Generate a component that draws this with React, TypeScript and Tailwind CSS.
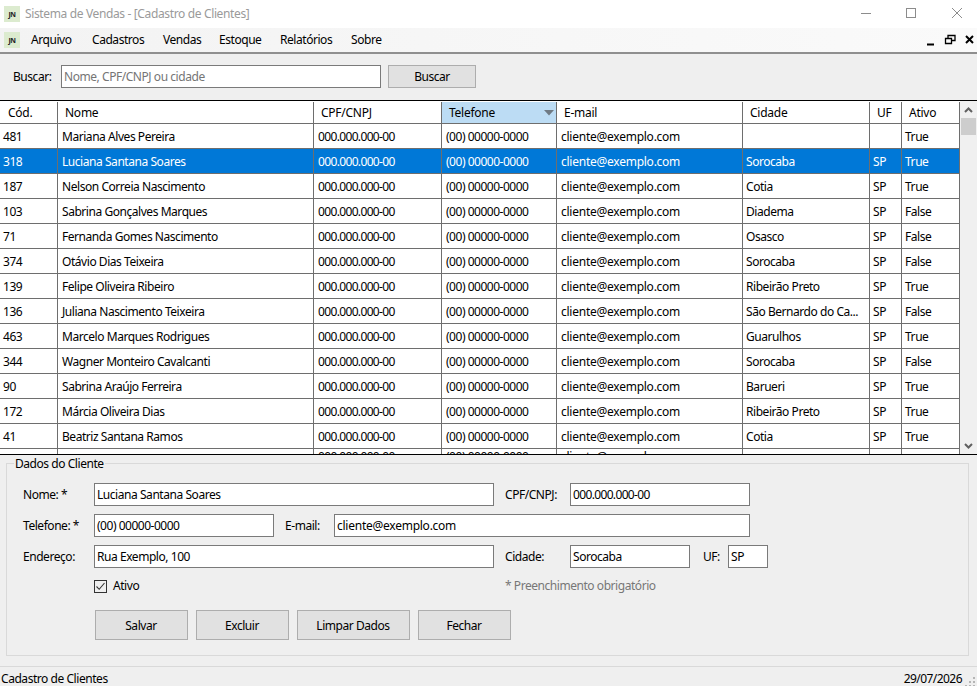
import React from "react";

// Column template shared by the header and the rows
const gridCols = "grid grid-cols-[58px_256px_128px_115px_186px_127px_32px_58px]";

type Cliente = {
  id: string;
  nome: string;
  cidade: string;
  uf: string;
  ativo: string;
};

const clientes: Cliente[] = [
  { id: "481", nome: "Mariana Alves Pereira", cidade: "", uf: "", ativo: "True" },
  { id: "318", nome: "Luciana Santana Soares", cidade: "Sorocaba", uf: "SP", ativo: "True" },
  { id: "187", nome: "Nelson Correia Nascimento", cidade: "Cotia", uf: "SP", ativo: "True" },
  { id: "103", nome: "Sabrina Gonçalves Marques", cidade: "Diadema", uf: "SP", ativo: "False" },
  { id: "71", nome: "Fernanda Gomes Nascimento", cidade: "Osasco", uf: "SP", ativo: "False" },
  { id: "374", nome: "Otávio Dias Teixeira", cidade: "Sorocaba", uf: "SP", ativo: "False" },
  { id: "139", nome: "Felipe Oliveira Ribeiro", cidade: "Ribeirão Preto", uf: "SP", ativo: "True" },
  { id: "136", nome: "Juliana Nascimento Teixeira", cidade: "São Bernardo do Ca...", uf: "SP", ativo: "False" },
  { id: "463", nome: "Marcelo Marques Rodrigues", cidade: "Guarulhos", uf: "SP", ativo: "True" },
  { id: "344", nome: "Wagner Monteiro Cavalcanti", cidade: "Sorocaba", uf: "SP", ativo: "False" },
  { id: "90", nome: "Sabrina Araújo Ferreira", cidade: "Barueri", uf: "SP", ativo: "True" },
  { id: "172", nome: "Márcia Oliveira Dias", cidade: "Ribeirão Preto", uf: "SP", ativo: "True" },
  { id: "41", nome: "Beatriz Santana Ramos", cidade: "Cotia", uf: "SP", ativo: "True" },
];

const menus = [
  { label: "Arquivo", className: "w-[61px]" },
  { label: "Cadastros", className: "w-[71px]" },
  { label: "Vendas", className: "w-[56px]" },
  { label: "Estoque", className: "w-[61px]" },
  { label: "Relatórios", className: "w-[71px]" },
  { label: "Sobre", className: "w-[50px]" },
];

const JnLogo = () => (
  <div className="w-[16px] h-[16px] bg-[#dcebcf] flex items-center justify-center text-[7px] font-bold leading-none text-[#222] tracking-[-0.5px]">
    JN
  </div>
);

const HeaderCell = ({ label, className = "" }: { label: string; className?: string }) => (
  <div className={`h-full border-r border-b border-[#6e6e6e] flex items-center truncate tracking-[-0.25px] ${className}`}>{label}</div>
);

const Cell = ({ children, className = "" }: { children?: React.ReactNode; className?: string }) => (
  <div className={`h-full border-r border-b border-[#6e6e6e] flex items-center pt-[2px] overflow-hidden whitespace-nowrap ${className}`}>
    {children}
  </div>
);

const Field = ({ value, className = "" }: { value: string; className?: string }) => (
  <input
    readOnly
    value={value}
    className={`h-[23px] shrink-0 bg-white border border-[#7a7a7a] px-[2px] outline-none text-black ${className}`}
  />
);

const ActionButton = ({ label, className = "" }: { label: string; className?: string }) => (
  <button className={`h-[30px] pt-[1px] pr-[1px] bg-[#e1e1e1] border border-[#adadad] text-black ${className}`}>{label}</button>
);

export default function App() {
  return (
    <div className="w-[977px] h-[686px] overflow-hidden bg-[#efefef] text-[12px] leading-[16px] text-black font-['Noto_Sans',sans-serif] tracking-[-0.45px]">
      {/* Title bar */}
      <div className="h-[28px] bg-white flex items-center">
        <div className="ml-[4px]">
          <JnLogo />
        </div>
        <span className="ml-[5px] text-[#9a9a9a] tracking-[-0.36px]">Sistema de Vendas - [Cadastro de Clientes]</span>
        <svg width="102" height="12" viewBox="0 0 102 12" className="ml-auto mr-[14px] mb-[3px]" fill="none" stroke="#8c8c8c" strokeWidth="1">
          <path d="M0 6.5H10" />
          <rect x="45.5" y="1.5" width="9" height="9" />
          <path d="M91 1L101 11M101 1L91 11" />
        </svg>
      </div>

      {/* Menu bar */}
      <div className="h-[24px] bg-gradient-to-r from-[#f3f3f3] to-[#fafafa] flex items-center">
        <div className="ml-[4px] mr-[11px]">
          <JnLogo />
        </div>
        {menus.map((m) => (
          <span key={m.label} className={m.className}>
            {m.label}
          </span>
        ))}
        <div className="ml-auto mr-[2px]">
          <svg width="50" height="12" viewBox="0 0 50 12" fill="none" stroke="#000">
            <path d="M2 10.5H9" strokeWidth="2" />
            <path d="M20.5 4.5h6v5h-6zM23 4V1.5h7v5h-3" strokeWidth="1.3" />
            <path d="M41 2L48 9M48 2L41 9" strokeWidth="2" />
          </svg>
        </div>
      </div>
      <div className="h-[2px] bg-[#8f8f8f]" />

      {/* Search */}
      <div className="h-[46px] flex items-start pt-[11px] pl-[13px]">
        <span className="w-[48px] leading-[23px]">Buscar:</span>
        <input
          readOnly
          placeholder="Nome, CPF/CNPJ ou cidade"
          className="w-[320px] h-[23px] bg-white border border-[#7a7a7a] px-[2px] outline-none placeholder:text-[#757575]"
        />
        <button className="ml-[7px] w-[88px] h-[23px] bg-[#e1e1e1] border border-[#adadad]">Buscar</button>
      </div>

      {/* Grid */}
      <div className="h-[355px] border-y border-black flex overflow-hidden">
        <div className="w-[960px] shrink-0 bg-white">
          <div className={`${gridCols} h-[23px] pt-px`}>
            <HeaderCell label="Cód." className="pl-[8px]" />
            <HeaderCell label="Nome" className="pl-[7px]" />
            <HeaderCell label="CPF/CNPJ" className="pl-[7px]" />
            <div className="h-full border-r border-b border-[#6e6e6e] bg-[#bcdcf4] flex items-center pl-[7px] relative tracking-[-0.25px]">
              Telefone
              <svg width="10" height="6" viewBox="0 0 10 6" className="absolute right-[2px] top-[8px]">
                <path d="M0 0H10L5 5.5Z" fill="#6f7a84" />
              </svg>
            </div>
            <HeaderCell label="E-mail" className="pl-[7px]" />
            <HeaderCell label="Cidade" className="pl-[7px]" />
            <HeaderCell label="UF" className="pl-[7px]" />
            <HeaderCell label="Ativo" className="pl-[7px]" />
          </div>
          {clientes.map((c) => {
            const selected = c.id === "318";
            return (
              <div key={c.id} className={`${gridCols} h-[25px] ${selected ? "bg-[#0078d7] text-white" : ""}`}>
                <Cell className="pl-[3px]">{c.id}</Cell>
                <Cell className="pl-[4px]">{c.nome}</Cell>
                <Cell className="pl-[4px] tracking-[-0.65px]">000.000.000-00</Cell>
                <Cell className="pl-[4px] tracking-[-0.48px]">(00) 00000-0000</Cell>
                <Cell className="pl-[4px] tracking-[-0.25px]">cliente@exemplo.com</Cell>
                <Cell className="pl-[3px]">{c.cidade}</Cell>
                <Cell className="pl-[3px]">{c.uf}</Cell>
                <Cell className="pl-[3px]">{c.ativo}</Cell>
              </div>
            );
          })}
          {/* Partly scrolled row: only the tops of its text show */}
          <div className={`${gridCols} h-[25px]`}>
            <Cell />
            <Cell />
            <Cell className="items-start !pt-0 pl-[4px] tracking-[-0.65px]">000.000.000-00</Cell>
            <Cell className="items-start !pt-0 pl-[4px] tracking-[-0.48px]">(00) 00000-0000</Cell>
            <Cell className="items-start !pt-0 pl-[4px] tracking-[-0.25px]">cliente@exemplo.com</Cell>
            <Cell />
            <Cell />
            <Cell />
          </div>
        </div>
        {/* Scrollbar */}
        <div className="flex-1 bg-[#f0f0f0] flex flex-col items-center">
          <svg width="9" height="6" viewBox="0 0 9 6" className="mt-[6px]" fill="none" stroke="#606060" strokeWidth="2">
            <path d="M1 5L4.5 1.5L8 5" />
          </svg>
          <div className="w-[15px] h-[17px] bg-[#cdcdcd] mt-[5px]" />
          <svg width="9" height="6" viewBox="0 0 9 6" className="mt-auto mb-[5px]" fill="none" stroke="#606060" strokeWidth="2">
            <path d="M1 1L4.5 4.5L8 1" />
          </svg>
        </div>
      </div>

      {/* Form */}
      <fieldset className="mx-[6px] w-[963px] h-[201px] border border-[#d9d9d9] pl-[16px]">
        <legend className="ml-[-9px] px-[1px] pt-[1px]">Dados do Cliente</legend>
        <div className="flex items-center mt-[11px]">
          <span className="w-[71px]">Nome: *</span>
          <Field value="Luciana Santana Soares" className="w-[400px]" />
          <span className="ml-[11px] w-[65px]">CPF/CNPJ:</span>
          <Field value="000.000.000-00" className="w-[180px] tracking-[-0.65px]" />
        </div>
        <div className="flex items-center mt-[8px]">
          <span className="w-[71px]">Telefone: *</span>
          <Field value="(00) 00000-0000" className="w-[180px] tracking-[-0.48px]" />
          <span className="ml-[11px] w-[49px]">E-mail:</span>
          <Field value="cliente@exemplo.com" className="w-[416px] tracking-[-0.25px]" />
        </div>
        <div className="flex items-center mt-[8px]">
          <span className="w-[71px]">Endereço:</span>
          <Field value="Rua Exemplo, 100" className="w-[400px]" />
          <span className="ml-[11px] w-[65px]">Cidade:</span>
          <Field value="Sorocaba" className="w-[120px]" />
          <span className="ml-[13px] w-[25px]">UF:</span>
          <Field value="SP" className="w-[40px]" />
        </div>
        <div className="flex items-center mt-[9px] h-[18px]">
          <div className="ml-[71px] w-[13px] h-[13px] border border-[#333] bg-[#efefef] flex items-center justify-center">
            <svg width="11" height="11" viewBox="0 0 11 11" fill="none" stroke="#333" strokeWidth="1.1">
              <path d="M1.5 5.5L4.2 8.3L9.5 2" />
            </svg>
          </div>
          <span className="ml-[6px] w-[28px]">Ativo</span>
          <span className="ml-[364px] text-[#777]">* Preenchimento obrigatório</span>
        </div>
        <div className="flex mt-[15px] ml-[72px] gap-[8px]">
          <ActionButton label="Salvar" className="w-[93px]" />
          <ActionButton label="Excluir" className="w-[93px]" />
          <ActionButton label="Limpar Dados" className="w-[113px]" />
          <ActionButton label="Fechar" className="w-[93px]" />
        </div>
      </fieldset>

      {/* Status bar */}
      <div className="mt-[10px] h-[20px] border-t border-[#d9d9d9] flex items-center pl-[1px] pt-[4px]">
        <span>Cadastro de Clientes</span>
        <span className="ml-auto tracking-[-0.55px]">29/07/2026</span>
        <svg width="12" height="12" viewBox="0 0 12 12" className="ml-[3px] mt-[4px]" fill="#b5b5b5">
          <rect x="8" y="2" width="2" height="2" />
          <rect x="4" y="6" width="2" height="2" />
          <rect x="8" y="6" width="2" height="2" />
          <rect x="0" y="10" width="2" height="2" />
          <rect x="4" y="10" width="2" height="2" />
          <rect x="8" y="10" width="2" height="2" />
        </svg>
      </div>
    </div>
  );
}
